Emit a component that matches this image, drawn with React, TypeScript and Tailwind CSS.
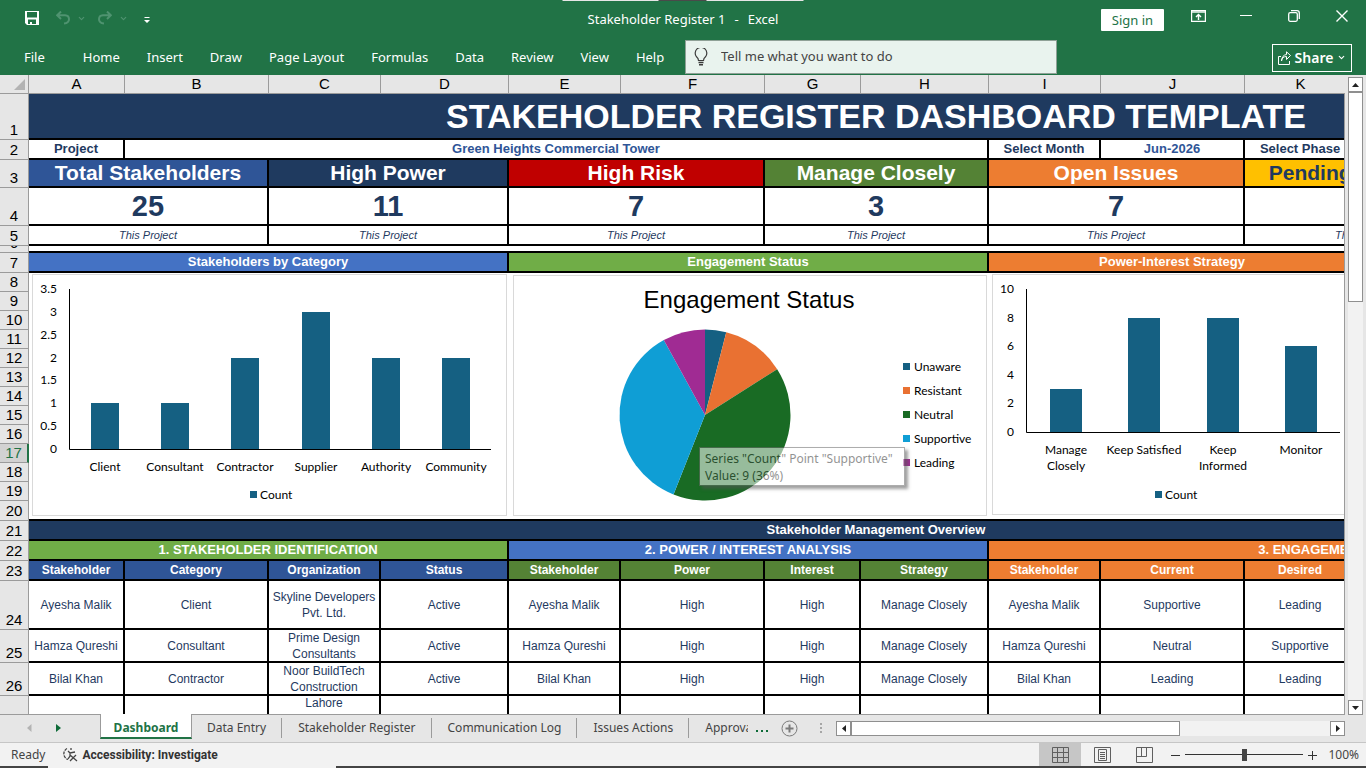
import React from 'react';
import { ChevronDown } from 'lucide-react';

const ribbonTabs = ['Home', 'Insert', 'Draw', 'Page Layout', 'Formulas', 'Data', 'Review', 'View', 'Help'];

const columns = [
  { name: 'A', width: 'w-[96px]' },
  { name: 'B', width: 'w-[144px]' },
  { name: 'C', width: 'w-[112px]' },
  { name: 'D', width: 'w-[128px]' },
  { name: 'E', width: 'w-[112px]' },
  { name: 'F', width: 'w-[144px]' },
  { name: 'G', width: 'w-[96px]' },
  { name: 'H', width: 'w-[128px]' },
  { name: 'I', width: 'w-[112px]' },
  { name: 'J', width: 'w-[144px]' },
  { name: 'K', width: 'w-[112px]' },
  { name: 'L', width: 'w-[128px]' },
  { name: 'M', width: 'w-[240px]' },
];

const kpis = [
  { title: 'Total Stakeholders', value: '25', color: 'bg-[#2f5597] text-white' },
  { title: 'High Power', value: '11', color: 'bg-[#1f3a5f] text-white' },
  { title: 'High Risk', value: '7', color: 'bg-[#c00000] text-white' },
  { title: 'Manage Closely', value: '3', color: 'bg-[#548235] text-white' },
  { title: 'Open Issues', value: '7', color: 'bg-[#ed7d31] text-white' },
  { title: 'Pending Approvals', value: '', color: 'bg-[#ffc000] text-[#1f3a5f]' },
];

const tableHeads = [
  { title: 'Stakeholder', color: 'bg-[#2f5597]' },
  { title: 'Category', color: 'bg-[#2f5597]' },
  { title: 'Organization', color: 'bg-[#2f5597]' },
  { title: 'Status', color: 'bg-[#2f5597]' },
  { title: 'Stakeholder', color: 'bg-[#548235]' },
  { title: 'Power', color: 'bg-[#548235]' },
  { title: 'Interest', color: 'bg-[#548235]' },
  { title: 'Strategy', color: 'bg-[#548235]' },
  { title: 'Stakeholder', color: 'bg-[#ed7d31]' },
  { title: 'Current', color: 'bg-[#ed7d31]' },
  { title: 'Desired', color: 'bg-[#ed7d31]' },
];

const stakeholders = [
  { row: 24, height: 'h-[49px]', cells: ['Ayesha Malik', 'Client', 'Skyline Developers Pvt. Ltd.', 'Active', 'Ayesha Malik', 'High', 'High', 'Manage Closely', 'Ayesha Malik', 'Supportive', 'Leading'] },
  { row: 25, height: 'h-[33px]', cells: ['Hamza Qureshi', 'Consultant', 'Prime Design Consultants', 'Active', 'Hamza Qureshi', 'High', 'High', 'Manage Closely', 'Hamza Qureshi', 'Neutral', 'Supportive'] },
  { row: 26, height: 'h-[33px]', cells: ['Bilal Khan', 'Contractor', 'Noor BuildTech Construction', 'Active', 'Bilal Khan', 'High', 'High', 'Manage Closely', 'Bilal Khan', 'Leading', 'Leading'] },
  { row: null, height: 'h-[49px]', cells: ['', '', 'Lahore', '', '', '', '', '', '', '', ''] },
];

const sheetTabs = ['Data Entry', 'Stakeholder Register', 'Communication Log', 'Issues Actions'];

const engagement = [
  { name: 'Unaware', value: 1, color: '#156082' },
  { name: 'Resistant', value: 3, color: '#e97132' },
  { name: 'Neutral', value: 10, color: '#196b24' },
  { name: 'Supportive', value: 9, color: '#0f9ed5' },
  { name: 'Leading', value: 2, color: '#a02b93' },
];

const RowHead: React.FC<{ n: number | null, height: string, active?: boolean }> = ({ n, height, active }) => (
  <th
    scope="row"
    className={`${height} border-b border-b-[#9b9b9b] p-0 align-bottom text-[15px] leading-[18px] font-normal not-italic ${active ? 'border-r-2 border-r-[#217346] bg-[#d2d2d2] text-[#217346]' : 'border-r border-r-[#9b9b9b] bg-[#e6e6e6] text-black'}`}
  >
    {n}
  </th>
);

const Cell: React.FC<{ span?: number, className?: string, children?: React.ReactNode }> = ({ span = 1, className = '', children }) => (
  <td colSpan={span} className={`overflow-hidden border-r-2 border-b-2 border-black p-0 text-center ${className}`}>
    {children}
  </td>
);

type Bar = { label: string[], value: number };

const ColumnChart: React.FC<{
  bars: Bar[], ticks: number[], width: number, height: number,
  left: number, right: number, top: number, bottom: number, barWidth: number, legendX: number
}> = ({ bars, ticks, width, height, left, right, top, bottom, barWidth, legendX }) => {
  const max = ticks[ticks.length - 1];
  const y = (v: number) => Math.round(bottom - (v / max) * (bottom - top));
  const step = (right - left) / bars.length;

  return (
    <svg width={width} height={height} className="block font-[Lato,sans-serif] text-[12px]" fill="#000">
      <rect x="0.5" y="0.5" width={width - 1} height={height - 1} fill="#fff" stroke="#d9d9d9" />
      {ticks.map((t) => (
        <text key={t} x={left - 12} y={y(t) + 4} textAnchor="end">{t}</text>
      ))}
      {bars.map((b, i) => {
        const center = Math.ceil(left + step * (i + 0.5));
        return (
          <g key={i}>
            <rect x={center - barWidth / 2} y={y(b.value)} width={barWidth} height={bottom - y(b.value)} fill="#156082" />
            {b.label.map((line, n) => (
              <text key={line} x={center} y={bottom + 22 + n * 16} textAnchor="middle">{line}</text>
            ))}
          </g>
        );
      })}
      <path d={`M${left + 0.5} ${top}V${bottom + 0.5}H${right}`} fill="none" stroke="#000" />
      <rect x={legendX} y="217" width="7" height="7" fill="#156082" />
      <text x={legendX + 10} y="225">Count</text>
    </svg>
  );
};

const PieChart: React.FC = () => {
  const total = engagement.reduce((sum, s) => sum + s.value, 0);
  const cx = 192;
  const cy = 140;
  const r = 85.5;
  const point = (v: number) => {
    const angle = (v / total) * Math.PI * 2;
    return `${cx + r * Math.sin(angle)} ${cy - r * Math.cos(angle)}`;
  };
  let start = 0;

  return (
    <svg width="474" height="241" className="block font-[Lato,sans-serif] text-[12px]">
      <rect x="0.5" y="0.5" width="473" height="240" fill="#fff" stroke="#d9d9d9" />
      <text x="236" y="33" textAnchor="middle" className="font-['Liberation_Sans',sans-serif] text-[24px]">Engagement Status</text>
      {engagement.map((s) => {
        const from = point(start);
        start += s.value;
        return <path key={s.name} d={`M${cx} ${cy}L${from}A${r} ${r} 0 0 1 ${point(start)}Z`} fill={s.color} />;
      })}
      {engagement.map((s, i) => (
        <g key={s.name}>
          <rect x="390" y={88 + i * 24} width="7" height="7" fill={s.color} />
          <text x="401" y={96 + i * 24}>{s.name}</text>
        </g>
      ))}
    </svg>
  );
};

const TitleBar: React.FC = () => (
  <div className="relative grid h-10 grid-cols-[1fr_auto_1fr]">
    <div className="absolute top-0 left-1/2 flex h-px w-[241px] -translate-x-1/2 bg-[#e6e6e6]">
      <div className="ml-24 w-12 bg-[#4a4a4a]" />
    </div>
    <div className="flex h-9 items-center pl-[25px]">
      <button aria-label="Save">
        <svg width="14" height="14" viewBox="0 0 14 14" fill="#fff">
          <path fillRule="evenodd" d="M0 0H14V14H2L0 12ZM2 1V6.500H12V1ZM3 8.500V13H5V11H7V13H11V8.500Z" />
        </svg>
      </button>
      <button aria-label="Undo" className="ml-[17px]">
        <svg width="14" height="14" viewBox="0 0 14 14" fill="none" stroke="#4f9370" strokeWidth="2">
          <path d="M5 0.500L1.200 4.300L5 8M1.500 4.300H9Q13 4.500 13 8.300Q13 12 8 12.600" />
        </svg>
      </button>
      <ChevronDown size={9} strokeWidth={3} className="ml-[7px] text-[#4f9370]" />
      <button aria-label="Redo" className="ml-[12px]">
        <svg width="14" height="14" viewBox="0 0 14 14" fill="none" stroke="#4f9370" strokeWidth="2">
          <path d="M9 0.500L12.800 4.300L9 8M12.500 4.300H5Q1 4.500 1 8.300Q1 12 6 12.600" />
        </svg>
      </button>
      <ChevronDown size={9} strokeWidth={3} className="ml-[7px] text-[#4f9370]" />
      <button aria-label="Customize Quick Access Toolbar" className="mt-1 ml-4">
        <svg width="6" height="7" viewBox="0 0 6 7" fill="#fff">
          <path d="M0.500 0H5.500V1H0.500ZM0 3H6L3 6Z" />
        </svg>
      </button>
    </div>
    <div className="flex items-center gap-[9px] text-[13px] whitespace-pre text-white">
      <span>Stakeholder Register 1</span>
      <span>-</span>
      <span>Excel</span>
    </div>
    <div className="flex items-center justify-end">
      <button className="mr-2.5 h-[22px] w-[63px] rounded-[1px] bg-white text-[13px] leading-[22px] text-[#217346]">Sign in</button>
      <button aria-label="Ribbon Display Options" className="flex h-8 w-12 items-center justify-center self-start">
        <svg width="15" height="12" viewBox="0 0 15 12" fill="none" stroke="#fff">
          <path d="M0.500 0.500H14.500V11.500H0.500Z" strokeWidth="1.400" />
          <path d="M0.500 2H14.500" strokeWidth="2" opacity="0.7" />
          <path d="M7.500 10V4.500M5 7L7.500 4.500L10 7" strokeWidth="1.400" />
        </svg>
      </button>
      <button aria-label="Minimize" className="flex h-8 w-12 items-center justify-center self-start">
        <svg width="12" height="12" stroke="#fff"><path d="M0 5.500H12" /></svg>
      </button>
      <button aria-label="Restore" className="flex h-8 w-12 items-center justify-center self-start">
        <svg width="12" height="12" viewBox="0 0 12 12" fill="none" stroke="#fff" strokeWidth="1.300">
          <rect x="0.700" y="2.700" width="8.600" height="8.600" rx="1.500" />
          <path d="M3 0.700H9Q11.300 0.700 11.300 3V9" />
        </svg>
      </button>
      <button aria-label="Close" className="flex h-8 w-12 items-center justify-center self-start">
        <svg width="12" height="12" stroke="#fff" strokeWidth="1.400"><path d="M0.500 0.500L11.500 11.500M11.500 0.500L0.500 11.500" /></svg>
      </button>
    </div>
  </div>
);

const Ribbon: React.FC = () => (
  <nav className="flex h-[35px] items-center pr-[14px] text-[13px] text-white">
    <div className="flex w-[685px] shrink-0 gap-px">
      <button className="mr-6 pl-6">File</button>
      {ribbonTabs.map((tab) => (
        <button key={tab} className="px-[13px] whitespace-nowrap">{tab}</button>
      ))}
    </div>
    <label className="flex h-[34px] w-[372px] items-center self-start border border-[#8fa197] bg-[#e9f3ee] pl-2">
      <svg width="14" height="18" viewBox="0 0 14 18" fill="none" stroke="#3b3b3b" strokeWidth="1.200">
        <path d="M4.500 12.500Q4.500 10.500 2.500 8.800A5.800 5.800 0 1 1 11.500 8.800Q9.500 10.500 9.500 12.500Z" />
        <path d="M4.500 14.500H9.500M5 16.700H9" strokeWidth="1.600" />
      </svg>
      <input aria-label="Tell me what you want to do" placeholder="Tell me what you want to do" className="ml-[13px] flex-1 bg-transparent outline-none placeholder:text-[#444444]" />
    </label>
    <button className="ml-auto flex h-7 w-20 items-center justify-center border border-white text-[14px] font-semibold">
      <svg width="13" height="14" viewBox="0 0 13 14" fill="none" stroke="#fff" className="mr-1">
        <path d="M3 5.500H0.500V13.500H11.500V10M3.500 10Q4 5.500 8.500 5.500V8.500L12.500 4.500L8.500 0.800V3.500Q4 4 3.500 10Z" />
      </svg>
      Share
      <ChevronDown size={9} strokeWidth={3} className="ml-1" />
    </button>
  </nav>
);

const Worksheet: React.FC = () => (
  <div className="min-w-0 flex-1 overflow-hidden border-b border-[#9b9b9b]">
    <table className="w-[1725px] table-fixed border-separate border-spacing-0 bg-white font-['Liberation_Sans',sans-serif] text-[12px] leading-4 text-[#1f3a5f]">
      <colgroup>
        <col className="w-[29px]" />
        {columns.map((c) => <col key={c.name} className={c.width} />)}
      </colgroup>
      <thead>
        <tr className="bg-[#e6e6e6] text-[15px] leading-[18px] text-black">
          <th className="h-[19px] border-r border-b border-[#9b9b9b] p-0">
            <svg width="11" height="11" className="mr-[3px] ml-auto block" fill="#b3b3b3"><path d="M11 0V11H0Z" /></svg>
          </th>
          {columns.map((c) => (
            <th key={c.name} scope="col" className="border-r border-b border-[#9b9b9b] p-0 font-normal">{c.name}</th>
          ))}
        </tr>
      </thead>
      <tbody>
        <tr>
          <RowHead n={1} height="h-[46px]" />
          <Cell span={13} className="bg-[#1f3a5f] text-[34px] leading-[44px] font-bold text-white">STAKEHOLDER REGISTER DASHBOARD TEMPLATE</Cell>
        </tr>
        <tr className="text-[13px] font-bold">
          <RowHead n={2} height="h-[20px]" />
          <Cell>Project</Cell>
          <Cell span={7} className="text-[#2f5597]">Green Heights Commercial Tower</Cell>
          <Cell>Select Month</Cell>
          <Cell className="text-[#2f5597]">Jun-2026</Cell>
          <Cell>Select Phase</Cell>
          <Cell span={2} />
        </tr>
        <tr className="text-[21px] leading-6 font-bold">
          <RowHead n={3} height="h-[28px]" />
          {kpis.map((k) => <Cell key={k.title} span={2} className={k.color}>{k.title}</Cell>)}
          <Cell />
        </tr>
        <tr className="text-[29px] leading-9 font-bold">
          <RowHead n={4} height="h-[38px]" />
          {kpis.map((k) => <Cell key={k.title} span={2}>{k.value}</Cell>)}
          <Cell />
        </tr>
        <tr className="text-[11px] italic">
          <RowHead n={5} height="h-[20px]" />
          {kpis.map((k) => <Cell key={k.title} span={2}>This Project</Cell>)}
          <Cell />
        </tr>
        <tr>
          <th scope="row" className="h-[7px] border-r border-b border-[#9b9b9b] bg-[#e6e6e6] p-0 text-[15px] leading-[18px] font-normal text-black">
            <div className="flex h-1.5 items-end justify-center overflow-hidden">6</div>
          </th>
          <Cell span={13} />
        </tr>
        <tr className="text-[13px] font-bold text-white">
          <RowHead n={7} height="h-[20px]" />
          <Cell span={4} className="bg-[#4472c4]">Stakeholders by Category</Cell>
          <Cell span={4} className="bg-[#70ad47]">Engagement Status</Cell>
          <Cell span={3} className="bg-[#ed7d31]">Power-Interest Strategy</Cell>
          <Cell span={2} />
        </tr>
        <tr>
          <RowHead n={8} height="h-[19px]" />
          <td colSpan={4} rowSpan={13} className="border-b-2 border-black p-0 pt-px pl-[3px] align-top">
            <ColumnChart
              width={475} height={242} left={37} right={459} top={15} bottom={175} barWidth={28} legendX={218}
              ticks={[0, 0.5, 1, 1.5, 2, 2.5, 3, 3.5]}
              bars={[
                { label: ['Client'], value: 1 },
                { label: ['Consultant'], value: 1 },
                { label: ['Contractor'], value: 2 },
                { label: ['Supplier'], value: 3 },
                { label: ['Authority'], value: 2 },
                { label: ['Community'], value: 2 },
              ]}
            />
          </td>
          <td colSpan={4} rowSpan={13} className="border-b-2 border-black p-0 pt-0.5 pl-1 align-top">
            <div className="relative">
              <PieChart />
              <div role="tooltip" className="absolute top-[172px] left-[186px] border border-[#6b6b6b] bg-white pt-0.5 pr-[11px] pb-px pl-[5px] text-left font-['Noto_Sans',sans-serif] text-[12px] leading-[17px] whitespace-nowrap text-[#3a3a3a] opacity-55 shadow-[3px_3px_3px_#555]">
                Series "Count" Point "Supportive"<br />
                Value: 9 (36%)
              </div>
            </div>
          </td>
          <td colSpan={5} rowSpan={13} className="border-b-2 border-black p-0 pt-px pl-[3px] align-top">
            <ColumnChart
              width={362} height={241} left={34} right={348} top={15} bottom={158} barWidth={32} legendX={163}
              ticks={[0, 2, 4, 6, 8, 10]}
              bars={[
                { label: ['Manage', 'Closely'], value: 3 },
                { label: ['Keep Satisfied'], value: 8 },
                { label: ['Keep', 'Informed'], value: 8 },
                { label: ['Monitor'], value: 6 },
              ]}
            />
          </td>
        </tr>
        {[9, 10, 11, 12, 13, 14, 15, 16, 17, 18, 19, 20].map((n) => (
          <tr key={n}>
            <RowHead n={n} height={n === 20 ? 'h-[20px]' : 'h-[19px]'} active={n === 17} />
          </tr>
        ))}
        <tr className="text-[13px] font-bold text-white">
          <RowHead n={21} height="h-[20px]" />
          <Cell span={13} className="bg-[#1f3a5f]">Stakeholder Management Overview</Cell>
        </tr>
        <tr className="text-[13px] font-bold text-white">
          <RowHead n={22} height="h-[20px]" />
          <Cell span={4} className="bg-[#70ad47]">1. STAKEHOLDER IDENTIFICATION</Cell>
          <Cell span={4} className="bg-[#4472c4]">2. POWER / INTEREST ANALYSIS</Cell>
          <Cell span={5} className="bg-[#ed7d31]">3. ENGAGEMENT MONITORING</Cell>
        </tr>
        <tr className="font-bold text-white">
          <RowHead n={23} height="h-[20px]" />
          {tableHeads.map((h, i) => <Cell key={i} className={h.color}>{h.title}</Cell>)}
          <Cell span={2} />
        </tr>
        {stakeholders.map((s, i) => (
          <tr key={i} className={s.row ? 'align-middle' : 'align-top'}>
            <RowHead n={s.row} height={s.height} />
            {s.cells.map((text, n) => (
              <Cell key={n}>
                <div className="-my-px">{text}</div>
              </Cell>
            ))}
            <Cell span={2} />
          </tr>
        ))}
      </tbody>
    </table>
  </div>
);

const VerticalScroll: React.FC = () => (
  <div className="flex w-[22px] shrink-0 bg-[#e6e6e6] pr-[3px]">
    <div className="mt-[18px] mr-[3px] w-px bg-[#9b9b9b]" />
    <div className="mt-0.5 flex flex-1 flex-col bg-[#f2f2f2]">
      <button aria-label="Scroll up" className="flex h-[15px] shrink-0 items-center justify-center border border-[#8f8f8f] bg-white">
        <svg width="7" height="4" fill="#222"><path d="M3.500 0L7 4H0Z" /></svg>
      </button>
      <div className="h-[210px] border border-[#8f8f8f] bg-white" />
      <button aria-label="Scroll down" className="mt-auto flex h-[15px] shrink-0 items-center justify-center border border-[#8f8f8f] bg-white">
        <svg width="7" height="4" fill="#222"><path d="M3.500 4L0 0H7Z" /></svg>
      </button>
    </div>
  </div>
);

const SheetBar: React.FC = () => (
  <div className="flex h-[27px] shrink-0 bg-[#e6e6e6] pr-[21px] font-['Noto_Sans',sans-serif] text-[12px] text-[#444444]">
    <div className="flex w-[836px] shrink-0 items-start">
      <div className="flex h-[26px] w-[100px] shrink-0 items-center pl-[27px]">
        <button aria-label="Previous sheet"><svg width="5" height="8" fill="#b3b3b3"><path d="M4.500 0V8L0 4Z" /></svg></button>
        <button aria-label="Next sheet" className="ml-6"><svg width="5" height="8" fill="#0e6b38"><path d="M0 0L5 4L0 8Z" /></svg></button>
      </div>
      <button className="-mt-px h-[25px] w-[92px] shrink-0 border-x border-b-2 border-x-[#9b9b9b] border-b-[#217346] bg-white pt-1 font-bold text-[#217346]">Dashboard</button>
      <div className="mt-[3px] flex h-5 min-w-0 items-center gap-px">
        {sheetTabs.map((tab) => (
          <button key={tab} className="h-5 shrink-0 border-r border-[#9b9b9b] px-[15px] whitespace-nowrap">{tab}</button>
        ))}
        <button className="w-[58px] shrink-0 overflow-hidden pl-[15px] text-left">Approvals</button>
      </div>
      <button aria-label="More sheets" className="ml-2 flex h-[26px] items-center">
        <svg width="12" height="10" fill="#0e6b38"><path d="M0 7H2V9H0ZM5 7H7V9H5ZM10 7H12V9H10Z" /></svg>
      </button>
      <button aria-label="New sheet" className="ml-[13px] flex h-[26px] items-center">
        <svg width="17" height="17" viewBox="0 0 17 17" fill="none" stroke="#7a7a7a">
          <circle cx="8.500" cy="8.500" r="7.500" />
          <path d="M8.500 4.500V12.500M4.500 8.500H12.500" strokeWidth="2" />
        </svg>
      </button>
      <div className="mr-[14px] ml-auto flex h-[26px] items-center">
        <svg width="2" height="10" fill="#a6a6a6"><path d="M0 0H2V2H0ZM0 4H2V6H0ZM0 8H2V10H0Z" /></svg>
      </div>
    </div>
    <div className="mt-1.5 flex h-[15px] flex-1 bg-[#f2f2f2]">
      <button aria-label="Scroll left" className="flex w-[15px] items-center justify-center border border-[#8f8f8f] bg-white">
        <svg width="4" height="7" fill="#222"><path d="M4 0V7L0 3.500Z" /></svg>
      </button>
      <div className="w-[329px] border border-[#8f8f8f] bg-white" />
      <button aria-label="Scroll right" className="ml-auto flex w-[15px] items-center justify-center border border-[#8f8f8f] bg-white">
        <svg width="4" height="7" fill="#222"><path d="M0 0L4 3.500L0 7Z" /></svg>
      </button>
    </div>
  </div>
);

const StatusBar: React.FC = () => (
  <footer className="shrink-0 bg-[#f2f2f2] font-['Noto_Sans',sans-serif] text-[12px] text-[#444444]">
    <div className="flex h-6 items-center border-t border-[#c6c6c6] pl-[11px]">
      <span>Ready</span>
      <button className="ml-[17px] flex items-center gap-1 font-[Roboto,sans-serif] font-bold text-[#333333]">
        <svg width="16" height="15" viewBox="0 0 16 15" fill="none" stroke="#444" strokeWidth="1.300">
          <path d="M5 1.500A6 6 0 0 0 6 12.500" strokeDasharray="3 1" />
          <path d="M6 4L8 6L13 5M8 6V9L6 12M9 1V3M8 8L15 14M14 8L8 14" />
        </svg>
        Accessibility: Investigate
      </button>
      <div className="ml-auto flex h-full items-center">
        <button aria-label="Normal view" className="flex h-full w-[42px] items-center justify-center bg-[#c6c6c6]">
          <svg width="17" height="16" fill="none" stroke="#5f5f5f"><path d="M0.500 0.500H16.500V15.500H0.500ZM5.500 0V16M11.500 0V16M0 5.500H17M0 10.500H17" /></svg>
        </button>
        <button aria-label="Page layout view" className="flex h-full w-[42px] items-center justify-center">
          <svg width="17" height="16" fill="none" stroke="#5f5f5f"><path d="M0.500 0.500H16.500V15.500H0.500ZM4.500 2.500H12.500V13.500H4.500ZM6 5.500H11M6 7.500H11M6 9.500H11M6 11.500H11" /></svg>
        </button>
        <button aria-label="Page break preview" className="flex h-full w-[42px] items-center justify-center">
          <svg width="17" height="16" fill="none" stroke="#5f5f5f"><path d="M0.500 0.500H16.500V15.500H0.500ZM0 9.500H10.500V0M5.500 0V9.500" /></svg>
        </button>
        <button aria-label="Zoom out" className="ml-1.5"><svg width="9" height="10" stroke="#333"><path d="M0 5.500H9" /></svg></button>
        <input
          type="range"
          aria-label="Zoom"
          defaultValue={50}
          className="mx-[5px] h-3 w-[118px] appearance-none bg-[linear-gradient(#333,#333)] bg-[length:100%_1px] bg-center bg-no-repeat [&::-webkit-slider-thumb]:h-3 [&::-webkit-slider-thumb]:w-[5px] [&::-webkit-slider-thumb]:appearance-none [&::-webkit-slider-thumb]:bg-[#444444]"
        />
        <button aria-label="Zoom in"><svg width="9" height="10" stroke="#333"><path d="M0 5.500H9M4.500 1V10" /></svg></button>
        <span className="w-[49px] pr-[7px] text-right">100%</span>
      </div>
    </div>
    <div className="flex h-0.5 bg-[#444444] pl-12">
      <div className="w-72 bg-[#f2f2f2]" />
    </div>
  </footer>
);

const App: React.FC = () => (
  <div className="flex h-screen w-full flex-col overflow-hidden bg-[#e6e6e6]">
    <header className="shrink-0 bg-[#217346] font-['Noto_Sans',sans-serif]">
      <TitleBar />
      <Ribbon />
    </header>
    <main className="flex min-h-0 flex-1">
      <Worksheet />
      <VerticalScroll />
    </main>
    <SheetBar />
    <StatusBar />
  </div>
);

export default App;
